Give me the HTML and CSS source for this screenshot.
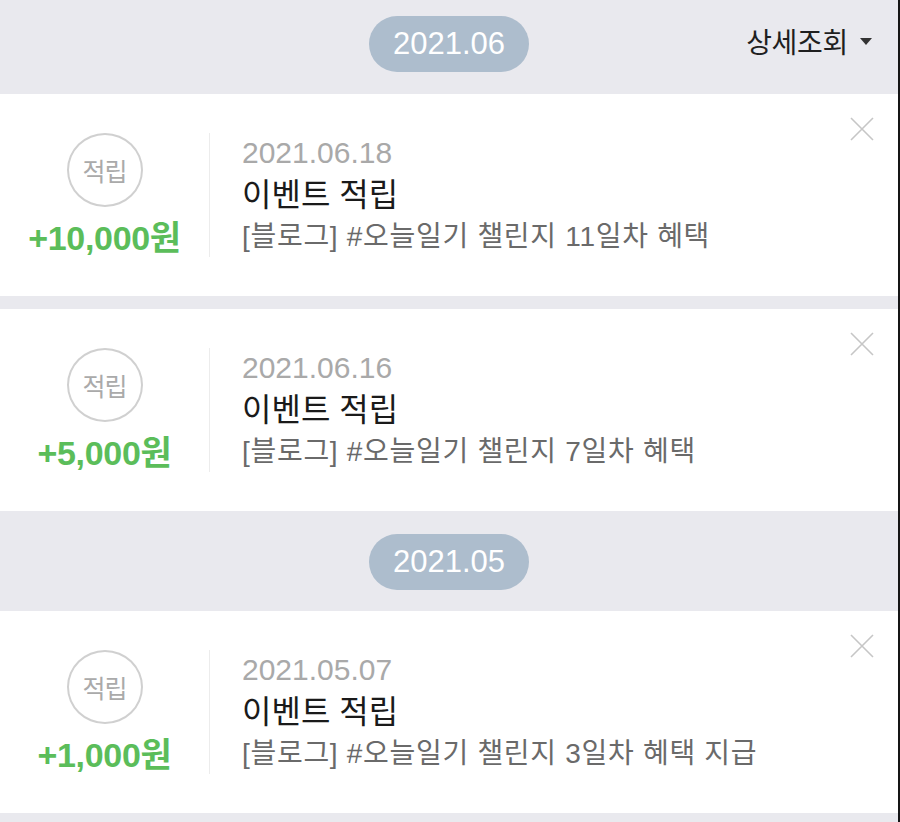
FILE: index.html
```html
<!DOCTYPE html>
<html lang="ko">
<head>
<meta charset="utf-8">
<title>적립 내역</title>
<link rel="stylesheet" href="styles.css">
</head>
<body>
<div class="page">
  <div class="month month-first">
    <span class="pill">2021.06</span>
    <button class="filter">상세조회 <span class="caret"></span></button>
  </div>

  <div class="card">
    <div class="left">
      <div class="badge">적립</div>
      <div class="amount">+10,000원</div>
    </div>
    <div class="info">
      <div class="date">2021.06.18</div>
      <div class="title">이벤트 적립</div>
      <div class="desc">[블로그] #오늘일기 챌린지 11일차 혜택</div>
    </div>
    <svg class="close" viewBox="0 0 24 24" width="24" height="24"><path d="M1 1L23 23M23 1L1 23" /></svg>
  </div>

  <div class="card card-gap">
    <div class="left">
      <div class="badge">적립</div>
      <div class="amount">+5,000원</div>
    </div>
    <div class="info">
      <div class="date">2021.06.16</div>
      <div class="title">이벤트 적립</div>
      <div class="desc">[블로그] #오늘일기 챌린지 7일차 혜택</div>
    </div>
    <svg class="close" viewBox="0 0 24 24" width="24" height="24"><path d="M1 1L23 23M23 1L1 23" /></svg>
  </div>

  <div class="month month-second">
    <span class="pill">2021.05</span>
  </div>

  <div class="card">
    <div class="left">
      <div class="badge">적립</div>
      <div class="amount">+1,000원</div>
    </div>
    <div class="info">
      <div class="date">2021.05.07</div>
      <div class="title">이벤트 적립</div>
      <div class="desc">[블로그] #오늘일기 챌린지 3일차 혜택 지급</div>
    </div>
    <svg class="close" viewBox="0 0 24 24" width="24" height="24"><path d="M1 1L23 23M23 1L1 23" /></svg>
  </div>
</div>
</body>
</html>
```
FILE: styles.css
```css
* { box-sizing: border-box; }
html, body {
  margin: 0;
  padding: 0;
  background: #e9e9ee;
}
body {
  font-family: "Liberation Sans", "Noto Sans CJK KR", sans-serif;
  width: 900px;
  height: 822px;
  overflow: hidden;
}
.page {
  width: 900px;
  height: 822px;
  border-right: 2px solid #151515;
  background: #e9e9ee;
}
.month {
  position: relative;
  display: flex;
  justify-content: center;
  align-items: flex-start;
}
.month-first {
  height: 94px;
  padding-top: 16px;
}
.month-second {
  height: 100px;
  padding-top: 23px;
}
.pill {
  display: flex;
  align-items: center;
  justify-content: center;
  width: 160px;
  height: 56px;
  border-radius: 28px;
  background: #adbdcd;
  color: #fff;
  font-size: 31px;
}
.filter {
  position: absolute;
  right: 26px;
  top: 21px;
  display: flex;
  align-items: center;
  gap: 12px;
  border: 0;
  background: none;
  padding: 0;
  font-family: "Noto Sans CJK KR", sans-serif;
  font-size: 28px;
  color: #1f1f1f;
  letter-spacing: -0.3px;
  line-height: 40px;
}
.caret {
  width: 0;
  height: 0;
  border-left: 6px solid transparent;
  border-right: 6px solid transparent;
  border-top: 7px solid #333;
}
.card {
  position: relative;
  height: 202px;
  background: #fff;
  display: flex;
  align-items: center;
}
.card-gap {
  margin-top: 13px;
}
.left {
  width: 210px;
  height: 124px;
  border-right: 1px solid #ececec;
  display: flex;
  flex-direction: column;
  align-items: center;
}
.badge {
  width: 76px;
  height: 76px;
  border: 2px solid #d0d0d0;
  border-radius: 50%;
  display: flex;
  align-items: center;
  justify-content: center;
  color: #aaa;
  font-family: "Noto Sans CJK KR", sans-serif;
  font-size: 25px;
  letter-spacing: -1px;
}
.amount {
  margin-top: 13px;
  line-height: 37px;
  font-size: 34px;
  font-weight: bold;
  color: #5bbd5a;
  letter-spacing: -0.3px;
}
.info {
  padding-left: 32px;
  display: flex;
  flex-direction: column;
}
.date {
  font-size: 30px;
  line-height: 42px;
  color: #a9a9a9;
}
.title {
  font-size: 32px;
  line-height: 42px;
  color: #1a1a1a;
}
.desc {
  font-size: 28px;
  line-height: 42px;
  color: #6a6a6a;
  letter-spacing: 0.7px;
}
.close {
  position: absolute;
  right: 24px;
  top: 23px;
  width: 24px;
  height: 24px;
  fill: none;
  stroke: #c6c6c6;
  stroke-width: 1.6;
}
```
